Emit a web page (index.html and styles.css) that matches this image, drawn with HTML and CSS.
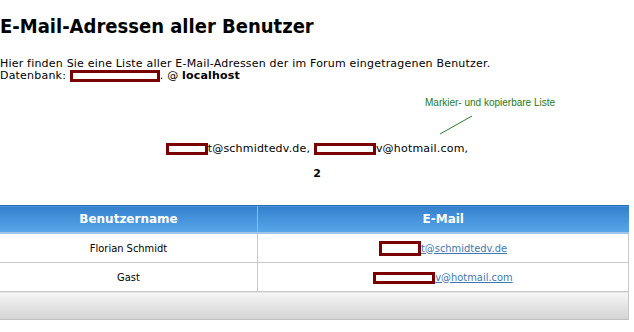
FILE: index.html
```html
<!DOCTYPE html>
<html lang="de">
<head>
<meta charset="UTF-8">
<title>E-Mail-Adressen aller Benutzer</title>
<link rel="stylesheet" href="styles.css">
</head>
<body>
<h1>E-Mail-Adressen aller Benutzer</h1>
<p class="intro">Hier finden Sie eine Liste aller E-Mail-Adressen der im Forum eingetragenen Benutzer.<br>
Datenbank: <span class="blackout w90"></span>. @ <b>localhost</b></p>

<div class="note">
    <span class="note-text">Markier- und kopierbare Liste</span>
    <svg class="note-line" width="40" height="22" viewBox="0 0 40 22"><line x1="2" y1="20" x2="34" y2="2" stroke="#2e7d2e" stroke-width="1"/></svg>
</div>

<p class="list"><span class="blackout w40"></span>t@schmidtedv.de, <span class="blackout w60"></span>v@hotmail.com,</p>
<p class="count">2</p>

<table class="users">
    <thead>
        <tr>
            <th class="col-name">Benutzername</th>
            <th>E-Mail</th>
        </tr>
    </thead>
    <tbody>
        <tr>
            <td>Florian Schmidt</td>
            <td><span class="blackout w40 tall"></span><a href="#">t@schmidtedv.de</a></td>
        </tr>
        <tr>
            <td>Gast</td>
            <td><span class="blackout w60"></span><a href="#">v@hotmail.com</a></td>
        </tr>
    </tbody>
    <tfoot>
        <tr><td colspan="2"></td></tr>
    </tfoot>
</table>
</body>
</html>
```

FILE: styles.css
```css
body {
    margin: 0;
    font-family: "DejaVu Sans", Verdana, sans-serif;
    font-size: 11px;
    color: #000;
    background: #fff;
}
h1 {
    margin: 0;
    padding-top: 14px;
    font-family: "DejaVu Sans Condensed", "DejaVu Sans", sans-serif;
    font-size: 20px;
    font-weight: bold;
    line-height: 24px;
}
.intro {
    margin: 20px 0 0 0;
    line-height: 12px;
    letter-spacing: 0.2px;
}
.blackout {
    display: inline-block;
    vertical-align: -3px;
    height: 6px;
    border: 3px solid #7a0000;
    background: #fff;
    letter-spacing: 0;
}
.blackout.tall {
    height: 9px;
    vertical-align: -4px;
}
.w90 { width: 84px; }
.w40 { width: 36px; }
.w60 { width: 56px; }
.note {
    position: relative;
    height: 60px;
}
.note-text {
    position: absolute;
    left: 425px;
    top: 15px;
    font-family: "Liberation Sans", Arial, sans-serif;
    font-size: 10px;
    color: #1c7a1c;
}
.note-line {
    position: absolute;
    left: 438px;
    top: 32px;
}
.list {
    margin: 0;
    text-align: center;
    line-height: 14px;
    letter-spacing: 0.2px;
}
.count {
    margin: 11px 0 0 0;
    text-align: center;
    font-weight: bold;
}
.users {
    margin-top: 25px;
    width: 629px;
    border-collapse: collapse;
}
.users th {
    height: 26px;
    padding: 0;
    color: #fff;
    font-size: 12px;
    font-weight: bold;
    background: linear-gradient(#3580cc, #4b97df 60%, #5aa6ea);
    border-top: 1px solid #2c6fb0;
    border-bottom: 2px solid #9fc6ea;
    border-left: 1px solid #8fbbe6;
}
.users th.col-name {
    width: 257px;
    border-left: none;
}
.users td {
    height: 28px;
    padding: 0;
    text-align: center;
    font-family: "DejaVu Sans Condensed", "DejaVu Sans", sans-serif;
    font-size: 11px;
    border-bottom: 1px solid #c8c8c8;
    border-left: 1px solid #c8c8c8;
    border-right: 1px solid #c8c8c8;
}
.users tbody td:first-child {
    border-left: none;
}
.users a {
    color: #4278b0;
    text-decoration: underline;
}
.users tfoot td {
    height: 27px;
    border-left: none;
    background: linear-gradient(#f6f6f6, #dddddd 70%, #d4d4d4);
    border-bottom: 1px solid #c0c0c0;
}
```
